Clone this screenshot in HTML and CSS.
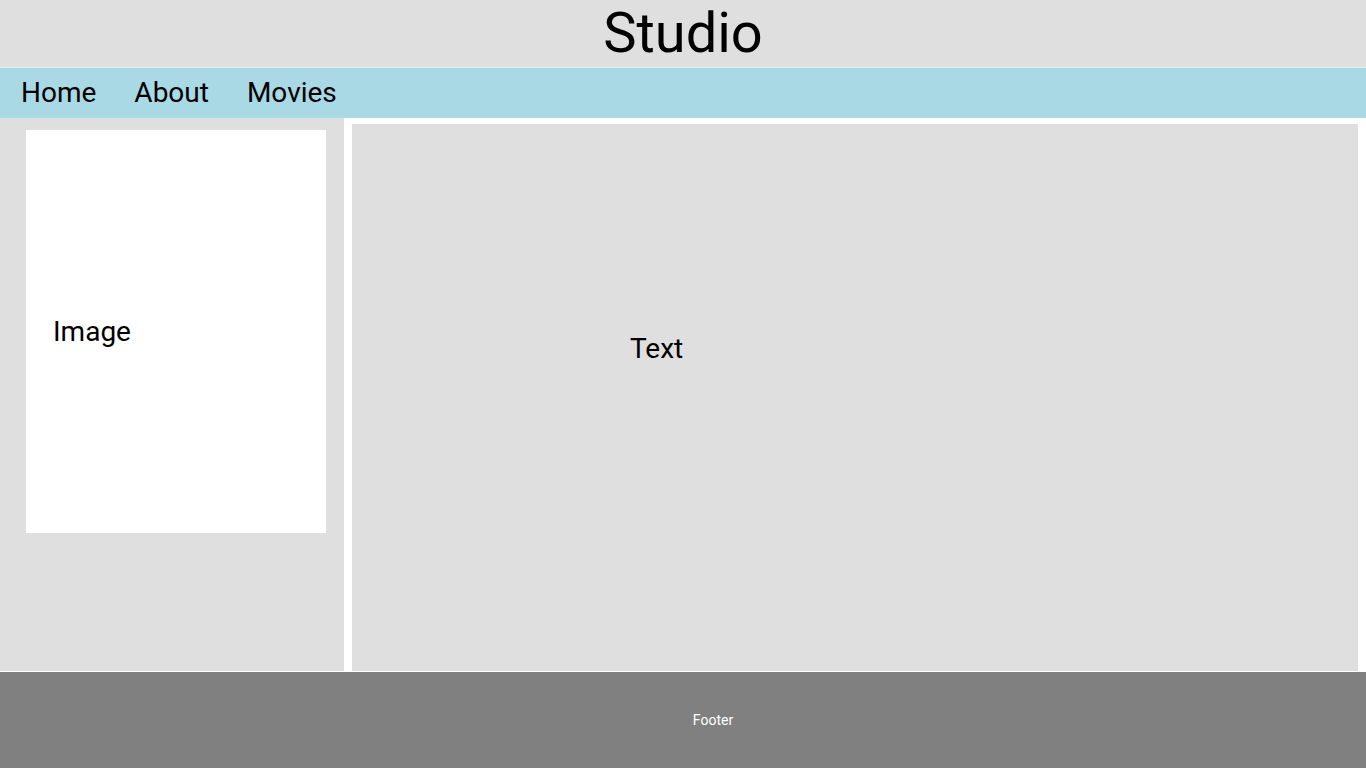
FILE: index.html
```html
<!DOCTYPE html>
<html lang="en">
<head>
<meta charset="utf-8">
<title>Studio</title>
<link rel="stylesheet" href="styles.css">
</head>
<body>
<div class="page">
  <header class="site-header">
    <h1 class="site-title">Studio</h1>
  </header>
  <nav class="site-nav">
    <a class="nav-link" href="#">Home</a>
    <a class="nav-link" href="#">About</a>
    <a class="nav-link" href="#">Movies</a>
  </nav>
  <div class="content">
    <aside class="sidebar">
      <div class="image-box">Image</div>
    </aside>
    <main class="main">
      <p class="main-text">Text</p>
    </main>
  </div>
  <footer class="site-footer">Footer</footer>
</div>
</body>
</html>
```

FILE: styles.css
```css
* { box-sizing: border-box; }
html, body { margin: 0; padding: 0; }
body {
  font-family: Roboto, "Liberation Sans", Arial, sans-serif;
  color: #000;
  background: #ffffff;
}
.page {
  display: flex;
  flex-direction: column;
  height: 768px;
}
.site-header {
  height: 68px;
  background: #dfdfdf;
  border-bottom: 1px solid #ececec;
  display: flex;
  justify-content: center;
  align-items: center;
}
.site-title {
  margin: 0;
  font-weight: 400;
  font-size: 56px;
  line-height: 1;
  padding-bottom: 1px;
}
.site-nav {
  height: 50px;
  background: #a9d9e5;
  display: flex;
  align-items: center;
  padding-left: 21px;
  gap: 38px;
}
.nav-link {
  color: #000;
  text-decoration: none;
  font-size: 28px;
  line-height: 1;
}
.content {
  flex: 1;
  display: flex;
  gap: 8px;
  padding-right: 8px;
  padding-bottom: 1px;
}
.sidebar {
  width: 344px;
  background: #dfdfdf;
  padding: 12px 18px 0 26px;
}
.image-box {
  width: 300px;
  height: 403px;
  background: #ffffff;
  display: flex;
  align-items: center;
  padding-left: 27px;
  font-size: 28px;
}
.main {
  flex: 1;
  margin-top: 6px;
  background: #dfdfdf;
  padding: 209px 0 0 278px;
}
.main-text {
  margin: 0;
  font-size: 28px;
  line-height: 32px;
}
.site-footer {
  height: 96px;
  background: #808080;
  color: #ffffff;
  font-size: 14px;
  display: flex;
  align-items: center;
  justify-content: center;
  padding-left: 60px;
}
```
